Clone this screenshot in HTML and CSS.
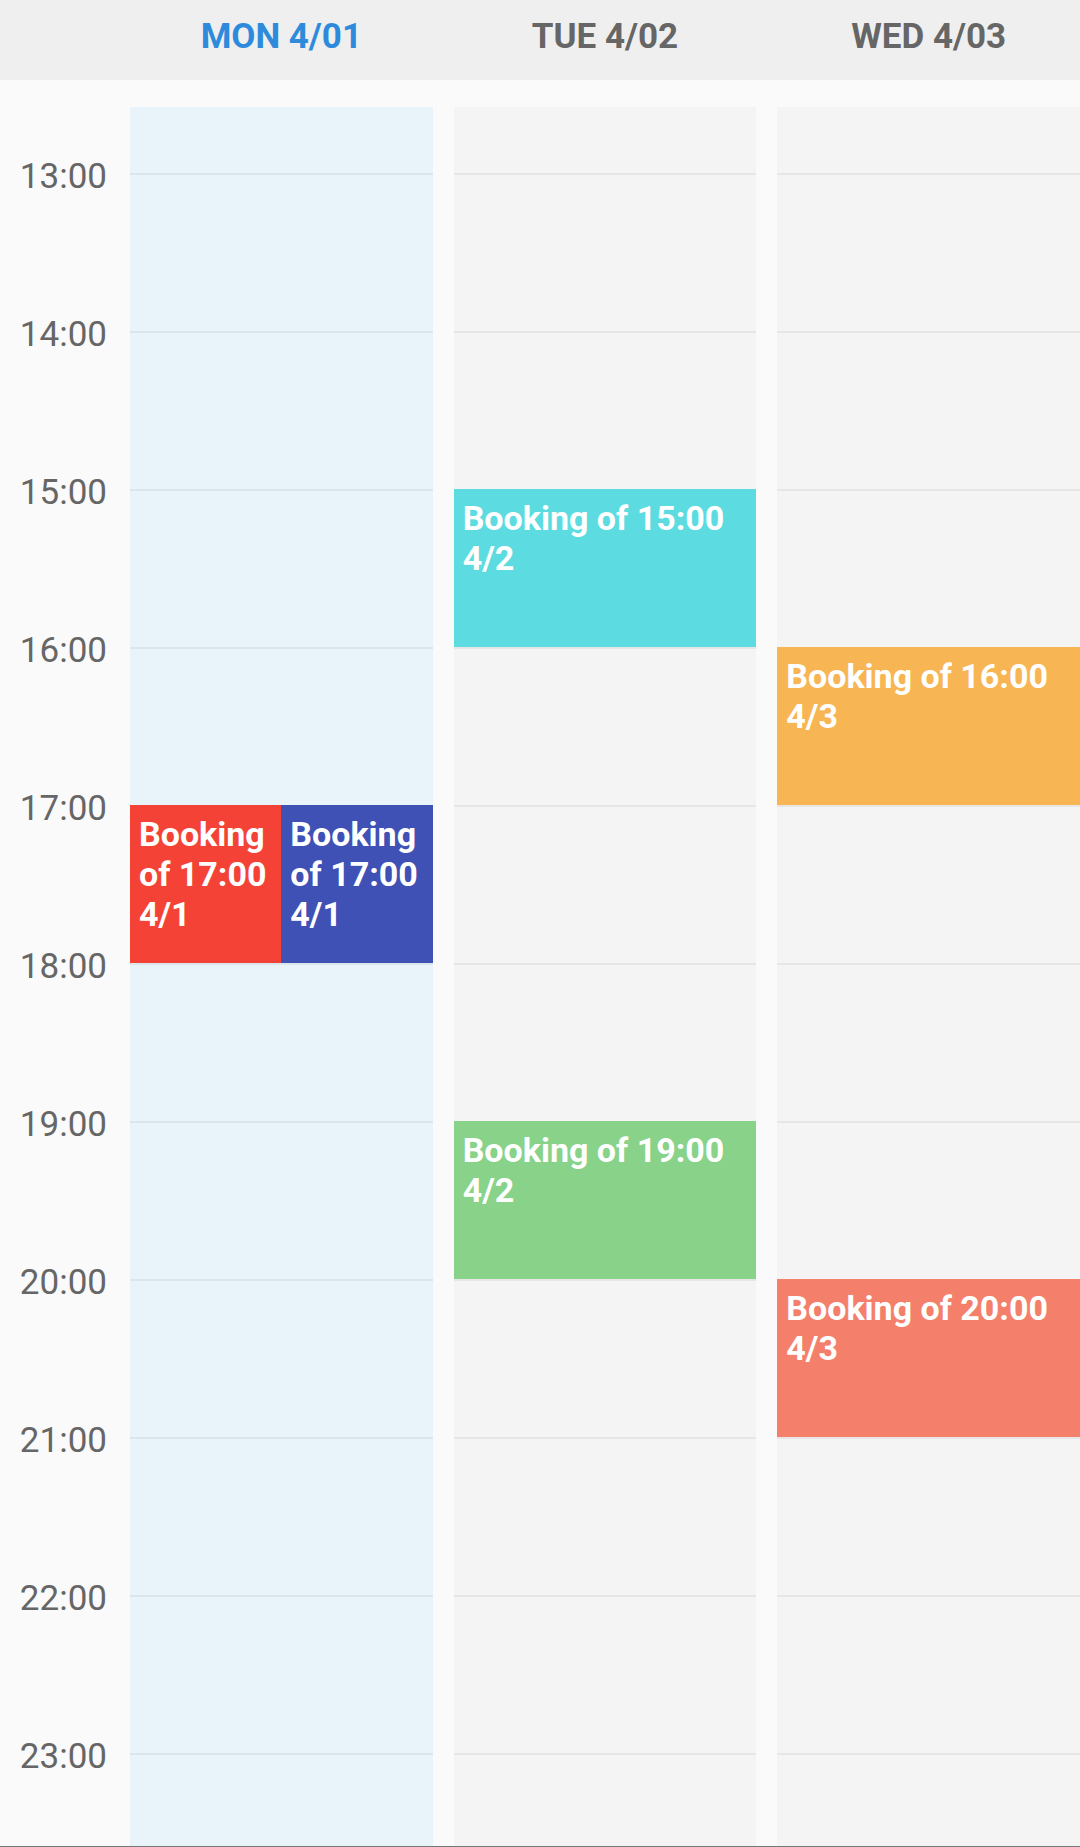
FILE: index.html
```html
<!DOCTYPE html>
<html lang="en">

<head>
    <meta charset="UTF-8">
    <meta name="viewport" content="width=device-width, initial-scale=1.0">
    <title>Bookings</title>
    <link rel="stylesheet" href="styles.css">
</head>

<body>

    <div class="calendar">
        <div class="header">
            <div class="corner"></div>
            <div class="day-title today">MON 4/01</div>
            <div class="day-title">TUE 4/02</div>
            <div class="day-title">WED 4/03</div>
        </div>

        <div class="grid">
            <!-- hour labels on the left -->
            <div class="times">
                <div class="time">13:00</div>
                <div class="time">14:00</div>
                <div class="time">15:00</div>
                <div class="time">16:00</div>
                <div class="time">17:00</div>
                <div class="time">18:00</div>
                <div class="time">19:00</div>
                <div class="time">20:00</div>
                <div class="time">21:00</div>
                <div class="time">22:00</div>
                <div class="time">23:00</div>
            </div>

            <div class="day today">
                <div class="hour"></div>
                <div class="hour"></div>
                <div class="hour"></div>
                <div class="hour"></div>
                <div class="hour">
                    <div class="slot">
                        <div class="event red">Booking of 17:00 4/1</div>
                        <div class="event indigo">Booking of 17:00 4/1</div>
                    </div>
                </div>
                <div class="hour"></div>
                <div class="hour"></div>
                <div class="hour"></div>
                <div class="hour"></div>
                <div class="hour"></div>
                <div class="hour"></div>
            </div>

            <div class="day">
                <div class="hour"></div>
                <div class="hour"></div>
                <div class="hour">
                    <div class="slot">
                        <div class="event cyan">Booking of 15:00 4/2</div>
                    </div>
                </div>
                <div class="hour"></div>
                <div class="hour"></div>
                <div class="hour"></div>
                <div class="hour">
                    <div class="slot">
                        <div class="event green">Booking of 19:00 4/2</div>
                    </div>
                </div>
                <div class="hour"></div>
                <div class="hour"></div>
                <div class="hour"></div>
                <div class="hour"></div>
            </div>

            <div class="day">
                <div class="hour"></div>
                <div class="hour"></div>
                <div class="hour"></div>
                <div class="hour">
                    <div class="slot">
                        <div class="event orange">Booking of 16:00 4/3</div>
                    </div>
                </div>
                <div class="hour"></div>
                <div class="hour"></div>
                <div class="hour"></div>
                <div class="hour">
                    <div class="slot">
                        <div class="event salmon">Booking of 20:00 4/3</div>
                    </div>
                </div>
                <div class="hour"></div>
                <div class="hour"></div>
                <div class="hour"></div>
            </div>
        </div>
    </div>

</body>

</html>
```

FILE: styles.css
```css
html,
body {
    margin: 0;
    padding: 0;
}

body {
    background-color: #fafafa;
    font-family: Roboto, "Noto Sans", sans-serif;
}

.calendar {
    height: 100vh;
    overflow: hidden;
    box-sizing: border-box;
    border-bottom: 1px solid #777777;
}

/* the gutter is 109px, plus the 21px gap = 130px before monday */
.header {
    display: grid;
    grid-template-columns: 109px repeat(3, 1fr);
    column-gap: 21px;
    height: 80px;
    align-items: center;
    background-color: #efefef;
}

.day-title {
    text-align: center;
    font-size: 35px;
    font-weight: bold;
    color: #666666;
    padding-bottom: 8px;
}

.day-title.today {
    color: #2e8bdb;
}

.grid {
    display: grid;
    grid-template-columns: 109px repeat(3, 1fr);
    column-gap: 21px;
    align-items: start;
}

.times {
    padding-top: 17px;
}

.time {
    height: 158px;
    display: flex;
    align-items: center;
    justify-content: flex-end;
    padding-right: 2px;
    font-size: 35px;
    color: #666666;
}

.day {
    margin-top: 27px;
    padding-top: 66px;
    background-color: #f4f4f4;
}

.day.today {
    background-color: #e8f3fa;
}

.hour {
    position: relative;
    height: 158px;
    box-sizing: border-box;
    border-top: 2px solid rgba(0, 0, 0, 0.055);
}

.slot {
    position: absolute;
    top: -2px;
    left: 0;
    right: 0;
    height: 158px;
    display: flex;
    z-index: 1;
}

.event {
    flex: 1;
    padding: 9px 9px;
    font-size: 34px;
    line-height: 40px;
    font-weight: bold;
    color: #ffffff;
}

.red {
    background-color: #f44336;
}

.indigo {
    background-color: #3f51b5;
}

.cyan {
    background-color: #5cdce0;
}

.green {
    background-color: #88d28a;
}

.orange {
    background-color: #f8b553;
}

.salmon {
    background-color: #f4806b;
}
```
